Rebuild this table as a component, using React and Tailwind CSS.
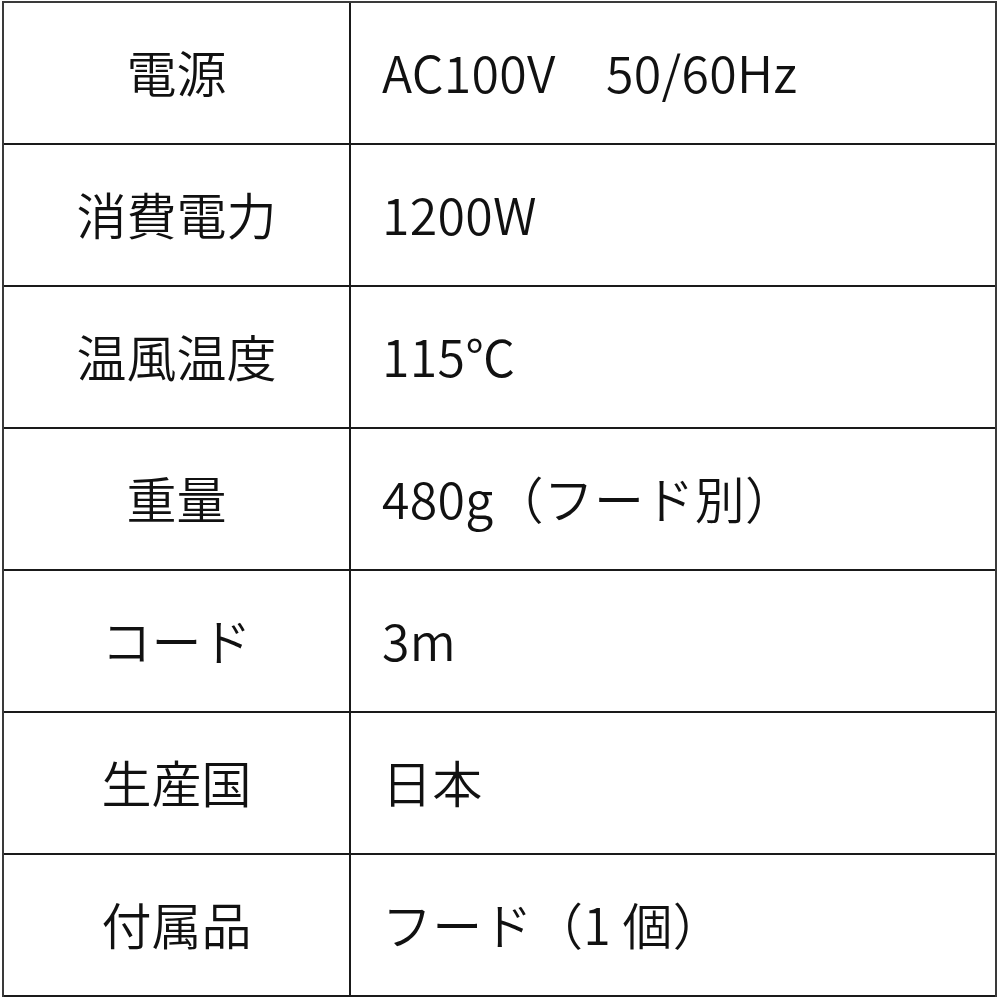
import React from 'react'

const specs = [
  { label: '電源', value: 'AC100V　50/60Hz' },
  { label: '消費電力', value: '1200W' },
  { label: '温風温度', value: '115℃' },
  { label: '重量', value: '480g（フード別）' },
  { label: 'コード', value: '3m' },
  { label: '生産国', value: '日本' },
  { label: '付属品', value: 'フード（1 個）' },
]

const App = () => {
  return (
    <div className="w-[1000px] h-[1000px] bg-white text-[#111] font-[350] font-['Noto_Sans_CJK_JP','Noto_Sans',sans-serif]">
      <div className="ml-[2px] mt-[1px] w-[995px] border-t-2 border-l-2 border-r-2 border-[#3a3a3a]">
        {specs.map((row) => (
          <div key={row.label} className="flex h-[142px] border-b-2 border-[#1a1a1a]">
            <div className="w-[347px] border-r-2 border-[#1a1a1a] flex items-center justify-center pb-[5px] text-[50px] leading-none">
              {row.label}
            </div>
            <div className="flex-1 flex items-center pl-[31px] pb-[5px] text-[50px] leading-none tracking-[0.3px]">
              {row.value}
            </div>
          </div>
        ))}
      </div>
    </div>
  )
}

export default App
